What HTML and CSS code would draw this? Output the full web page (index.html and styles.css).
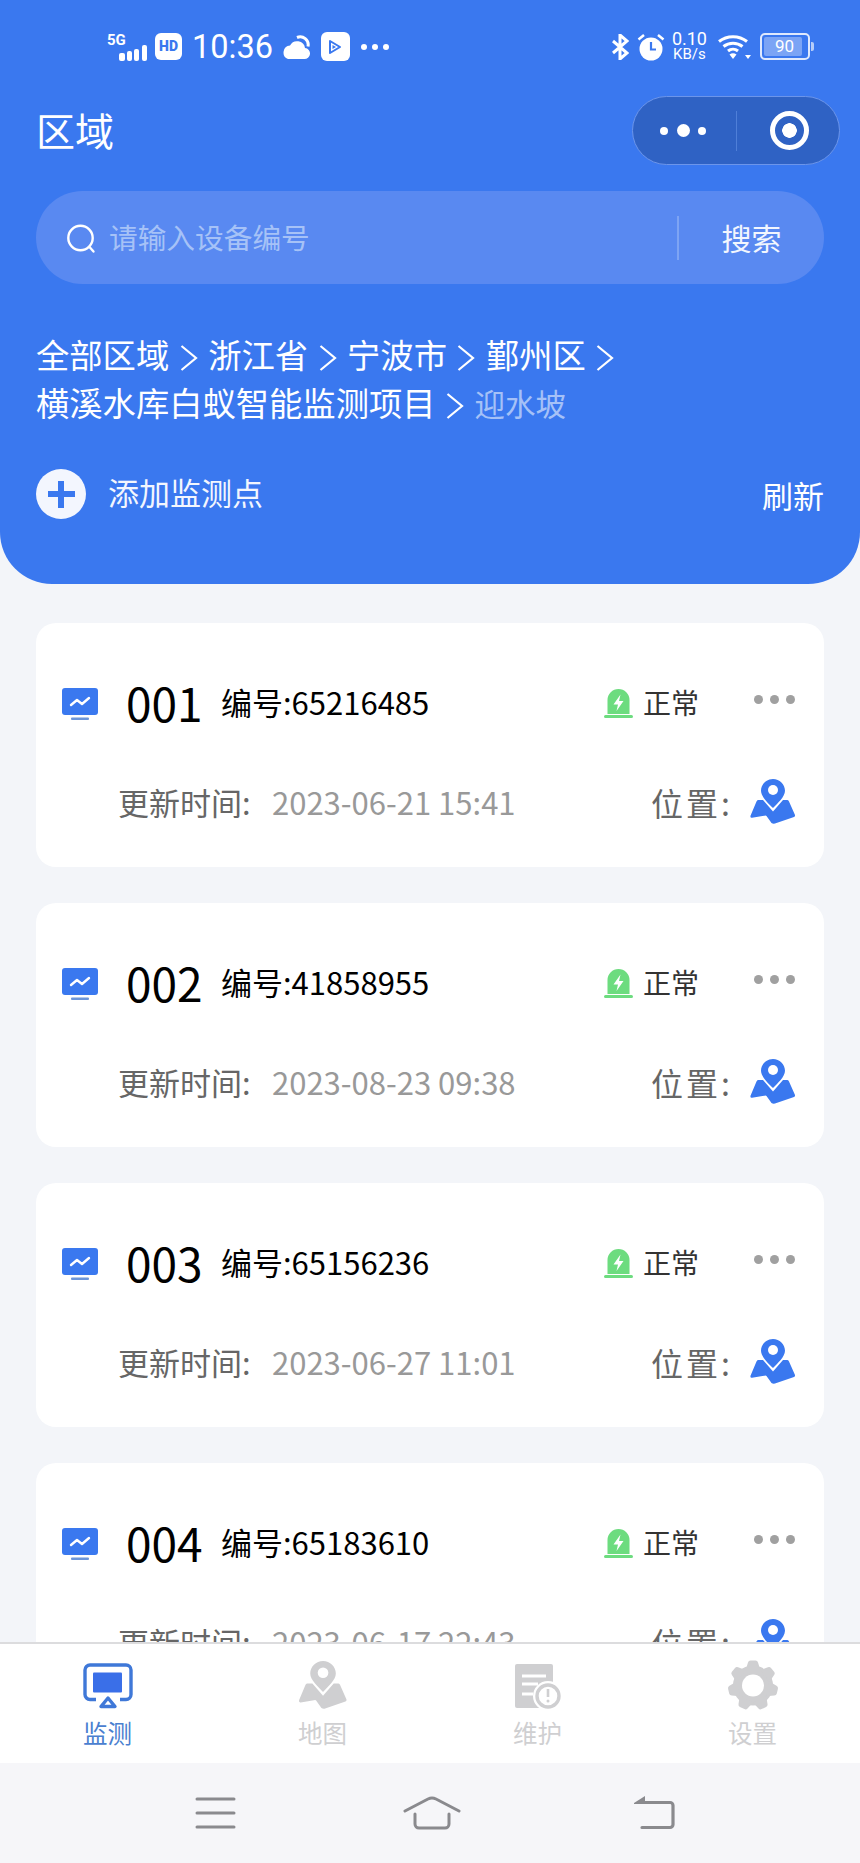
FILE: index.html
```html
<!DOCTYPE html>
<html lang="zh">
<head>
<meta charset="utf-8">
<title>区域</title>
<link rel="stylesheet" href="styles.css">
</head>
<body>
<svg class="defs" width="0" height="0" aria-hidden="true">
  <symbol id="map" viewBox="0 0 45 45">
    <path fill="currentColor" d="M8 21h5L23 32.500 33 21h4.500q1 0 1.500 1.500L45 36q.3 1.500-1 2L25 44.500q-2 .5-3.500-.5l-5-7q-.5-.8-2-.3L2 38.800q-2 .2-1.500-2L6.500 22.500Q7 21 8 21z"/>
    <path fill="currentColor" d="M23 0C29.600 0 35 5.300 35 11.800c0 6-7.500 12.700-12 17.200-4.500-4.500-12-11.200-12-17.200C11 5.300 16.400 0 23 0z"/>
    <circle cx="23" cy="11" r="5" fill="#fff"/>
  </symbol>
  <symbol id="chev" viewBox="0 0 18 28">
    <path fill="none" stroke="currentColor" stroke-width="2.200" d="M1.500 2L16 14 1.500 26"/>
  </symbol>
</svg>

<header class="hero">
  <div class="status">
    <div class="status-left">
      <svg class="sig" width="46" height="30" viewBox="0 0 46 30"><text x="0" y="13" class="sig-text">5G</text><rect x="12" y="21" width="6" height="8" rx="2" fill="#fff"/><rect x="20" y="19" width="5" height="10" rx="2" fill="#fff"/><rect x="27" y="17" width="5" height="12" rx="2" fill="#fff"/><rect x="35" y="13" width="5" height="16" rx="2" fill="#fff"/></svg>
      <span class="hd">HD</span>
      <span class="time">10:36</span>
      <svg width="28" height="26" viewBox="0 0 28 26"><path fill="#fff" d="M6 25h16a5.500 5.500 0 0 0 1-11 8 8 0 0 0-15-2.500A7 7 0 0 0 6 25z"/><path fill="none" stroke="#fff" stroke-width="3" d="M15 3.500a8 8 0 0 1 11 9"/></svg>
      <span class="app"><svg width="16" height="16" viewBox="0 0 16 16"><path fill="none" stroke="#3a78ef" stroke-width="2" stroke-linejoin="round" d="M3 2l10 6-10 6z"/><path fill="#3a78ef" d="M5.500 6l3.500 2-3.500 2z"/></svg></span>
      <span class="more"><i></i><i></i><i></i></span>
    </div>
    <div class="status-right">
      <svg width="18" height="26" viewBox="0 0 18 26"><path fill="none" stroke="#fff" stroke-width="3" d="M2 7l14 12-7 6V1l7 6L2 19"/></svg>
      <svg width="28" height="28" viewBox="0 0 28 28"><circle cx="14" cy="16" r="11.500" fill="#fff"/><path fill="none" stroke="#3a78ef" stroke-width="2.200" d="M14 9v7.500h5"/><path fill="none" stroke="#fff" stroke-width="2.500" d="M1.500 6.500L7 2M26.500 6.500L21 2"/></svg>
      <span class="speed"><b>0.10</b><small>KB/s</small></span>
      <svg width="34" height="26" viewBox="0 0 34 26"><path fill="none" stroke="#fff" stroke-width="3" d="M1 7.500c8-6.500 20-6.500 28 0M5.500 12.500c5.500-4.500 13.500-4.500 19 0M10 17c3-2.500 7-2.500 10 0"/><path fill="#fff" d="M11.500 20.500q3.500-2.500 7 0L15 25z"/><path fill="#fff" d="M27 21h6l-3 4z"/></svg>
      <span class="batt"><span class="batt-fill">90</span></span>
    </div>
  </div>

  <div class="titlebar">
    <h1 class="title">区域</h1>
    <div class="capsule">
      <span class="cap-dots"><i></i><i class="big"></i><i></i></span>
      <span class="cap-line"></span>
      <span class="cap-target"></span>
    </div>
  </div>

  <div class="search">
    <svg class="search-ico" width="30" height="30" viewBox="0 0 30 30"><circle cx="14.500" cy="14" r="12.200" fill="none" stroke="#fff" stroke-width="2.400"/><path stroke="#fff" stroke-width="2.400" stroke-linecap="round" d="M23.500 23l4 4.500"/></svg>
    <span class="search-ph">请输入设备编号</span>
    <span class="search-line"></span>
    <span class="search-btn">搜索</span>
  </div>

  <p class="crumbs">全部区域<svg class="sep"><use href="#chev"/></svg>浙江省<svg class="sep"><use href="#chev"/></svg>宁波市<svg class="sep"><use href="#chev"/></svg>鄞州区<svg class="sep"><use href="#chev"/></svg><br>横溪水库白蚁智能监测项目<svg class="sep"><use href="#chev"/></svg><span class="crumb-cur">迎水坡</span></p>

  <div class="actions">
    <div class="add">
      <span class="add-ico"></span>
      <span class="add-text">添加监测点</span>
    </div>
    <span class="refresh">刷新</span>
  </div>
</header>

<main class="list">
  <article class="card">
    <div class="row-top">
      <svg class="mon" width="36" height="33" viewBox="0 0 36 33"><rect width="36" height="27" rx="3" fill="#3a78ef"/><path fill="none" stroke="#fff" stroke-width="2.400" stroke-linecap="round" stroke-linejoin="round" d="M9 17l6-5 5 4 7-6"/><rect x="9" y="29.500" width="18" height="2.500" rx="1" fill="#6d96d8"/></svg>
      <span class="num">001</span>
      <span class="code">编号:65216485</span>
      <svg class="bell" width="29" height="29" viewBox="0 0 29 29"><path fill="#6ddc7f" d="M3.500 25V11a11 11 0 0 1 22 0v14z"/><path fill="#fff" d="M16.500 5.500l-7 10h4.500l-1.500 6.500 7-10h-4.500z"/><rect y="26" width="29" height="3" rx="1.500" fill="#6ddc7f"/></svg>
      <span class="state">正常</span>
      <span class="dots"><i></i><i></i><i></i></span>
    </div>
    <div class="row-bottom">
      <span class="label">更新时间:</span>
      <span class="date">2023-06-21 15:41</span>
      <span class="pos">位置:</span>
      <svg class="pin" width="45" height="45"><use href="#map"/></svg>
    </div>
  </article>

  <article class="card">
    <div class="row-top">
      <svg class="mon" width="36" height="33" viewBox="0 0 36 33"><rect width="36" height="27" rx="3" fill="#3a78ef"/><path fill="none" stroke="#fff" stroke-width="2.400" stroke-linecap="round" stroke-linejoin="round" d="M9 17l6-5 5 4 7-6"/><rect x="9" y="29.500" width="18" height="2.500" rx="1" fill="#6d96d8"/></svg>
      <span class="num">002</span>
      <span class="code">编号:41858955</span>
      <svg class="bell" width="29" height="29" viewBox="0 0 29 29"><path fill="#6ddc7f" d="M3.500 25V11a11 11 0 0 1 22 0v14z"/><path fill="#fff" d="M16.500 5.500l-7 10h4.500l-1.500 6.500 7-10h-4.500z"/><rect y="26" width="29" height="3" rx="1.500" fill="#6ddc7f"/></svg>
      <span class="state">正常</span>
      <span class="dots"><i></i><i></i><i></i></span>
    </div>
    <div class="row-bottom">
      <span class="label">更新时间:</span>
      <span class="date">2023-08-23 09:38</span>
      <span class="pos">位置:</span>
      <svg class="pin" width="45" height="45"><use href="#map"/></svg>
    </div>
  </article>

  <article class="card">
    <div class="row-top">
      <svg class="mon" width="36" height="33" viewBox="0 0 36 33"><rect width="36" height="27" rx="3" fill="#3a78ef"/><path fill="none" stroke="#fff" stroke-width="2.400" stroke-linecap="round" stroke-linejoin="round" d="M9 17l6-5 5 4 7-6"/><rect x="9" y="29.500" width="18" height="2.500" rx="1" fill="#6d96d8"/></svg>
      <span class="num">003</span>
      <span class="code">编号:65156236</span>
      <svg class="bell" width="29" height="29" viewBox="0 0 29 29"><path fill="#6ddc7f" d="M3.500 25V11a11 11 0 0 1 22 0v14z"/><path fill="#fff" d="M16.500 5.500l-7 10h4.500l-1.500 6.500 7-10h-4.500z"/><rect y="26" width="29" height="3" rx="1.500" fill="#6ddc7f"/></svg>
      <span class="state">正常</span>
      <span class="dots"><i></i><i></i><i></i></span>
    </div>
    <div class="row-bottom">
      <span class="label">更新时间:</span>
      <span class="date">2023-06-27 11:01</span>
      <span class="pos">位置:</span>
      <svg class="pin" width="45" height="45"><use href="#map"/></svg>
    </div>
  </article>

  <article class="card">
    <div class="row-top">
      <svg class="mon" width="36" height="33" viewBox="0 0 36 33"><rect width="36" height="27" rx="3" fill="#3a78ef"/><path fill="none" stroke="#fff" stroke-width="2.400" stroke-linecap="round" stroke-linejoin="round" d="M9 17l6-5 5 4 7-6"/><rect x="9" y="29.500" width="18" height="2.500" rx="1" fill="#6d96d8"/></svg>
      <span class="num">004</span>
      <span class="code">编号:65183610</span>
      <svg class="bell" width="29" height="29" viewBox="0 0 29 29"><path fill="#6ddc7f" d="M3.500 25V11a11 11 0 0 1 22 0v14z"/><path fill="#fff" d="M16.500 5.500l-7 10h4.500l-1.500 6.500 7-10h-4.500z"/><rect y="26" width="29" height="3" rx="1.500" fill="#6ddc7f"/></svg>
      <span class="state">正常</span>
      <span class="dots"><i></i><i></i><i></i></span>
    </div>
    <div class="row-bottom">
      <span class="label">更新时间:</span>
      <span class="date">2023-06-17 22:43</span>
      <span class="pos">位置:</span>
      <svg class="pin" width="45" height="45"><use href="#map"/></svg>
    </div>
  </article>
</main>

<nav class="tabs">
  <div class="tab tab-on">
    <svg width="50" height="46" viewBox="0 0 50 46"><path fill="none" stroke="#3f78d8" stroke-width="3.400" stroke-linejoin="round" d="M13 36.500H7a5 5 0 0 1-5-5V7a5 5 0 0 1 5-5h36a5 5 0 0 1 5 5v24.500a5 5 0 0 1-5 5h-6"/><rect x="10" y="9.500" width="29" height="20" rx="1" fill="#3a6fe8"/><path fill="none" stroke="#3f78d8" stroke-width="3.400" stroke-linejoin="round" d="M25 35l7 8.500H18z"/></svg>
    <span>监测</span>
  </div>
  <div class="tab">
    <svg class="tab-map" width="49" height="48"><use href="#map"/></svg>
    <span>地图</span>
  </div>
  <div class="tab">
    <svg width="50" height="46" viewBox="0 0 50 46"><path fill="#cfcfd1" d="M4 1h34a2 2 0 0 1 2 2v42H4a2 2 0 0 1-2-2V3a2 2 0 0 1 2-2z"/><path stroke="#fff" stroke-width="3" d="M9 13h24M9 21h16M9 31h11"/><circle cx="35" cy="33" r="15" fill="#fff"/><circle cx="35" cy="33" r="11" fill="#fff" stroke="#cfcfd1" stroke-width="3.400"/><path stroke="#cfcfd1" stroke-width="2.600" d="M35 26v8"/><circle cx="35" cy="38" r="1.500" fill="#cfcfd1"/></svg>
    <span>维护</span>
  </div>
  <div class="tab">
    <svg class="tab-gear" width="52" height="51" viewBox="0 0 52 50"><g fill="#cfcfd1"><circle cx="26" cy="25" r="20"/><path d="M18.500 10L21 2q.5-2 2.500-2h5q2 0 2.500 2L33.500 10z"/><path d="M18.500 10L21 2q.5-2 2.500-2h5q2 0 2.500 2L33.500 10z" transform="rotate(51.430 26 25)"/><path d="M18.500 10L21 2q.5-2 2.500-2h5q2 0 2.500 2L33.500 10z" transform="rotate(102.860 26 25)"/><path d="M18.500 10L21 2q.5-2 2.500-2h5q2 0 2.500 2L33.500 10z" transform="rotate(154.290 26 25)"/><path d="M18.500 10L21 2q.5-2 2.500-2h5q2 0 2.500 2L33.500 10z" transform="rotate(205.710 26 25)"/><path d="M18.500 10L21 2q.5-2 2.500-2h5q2 0 2.500 2L33.500 10z" transform="rotate(257.140 26 25)"/><path d="M18.500 10L21 2q.5-2 2.500-2h5q2 0 2.500 2L33.500 10z" transform="rotate(308.570 26 25)"/></g><circle cx="26" cy="25" r="11" fill="#fff"/></svg>
    <span>设置</span>
  </div>
</nav>

<footer class="sysnav">
  <svg width="42" height="34" viewBox="0 0 42 34"><path stroke="#8a8a8e" stroke-width="3" stroke-linecap="round" d="M2 3h37M2 17h37M2 31h37"/></svg>
  <svg width="58" height="36" viewBox="0 0 58 36"><path fill="none" stroke="#8a8a8e" stroke-width="3" stroke-linecap="round" stroke-linejoin="round" d="M2 16L25 4q4-2 8 0l23 12M12 19v10a4 4 0 0 0 4 4h26a4 4 0 0 0 4-4V19"/></svg>
  <svg class="nav-back" width="42" height="34" viewBox="0 0 42 34"><path fill="none" stroke="#8a8a8e" stroke-width="3.200" stroke-linecap="round" stroke-linejoin="round" d="M10 6.500h26a3 3 0 0 1 3 3v19a3 3 0 0 1-3 3H8"/><path fill="#8a8a8e" d="M0 7l11-7v8H0z"/></svg>
</footer>
</body>
</html>
```

FILE: styles.css
```css
* { box-sizing: border-box; }
html, body { margin: 0; padding: 0; }
body {
  width: 860px;
  height: 1863px;
  overflow: hidden;
  display: flex;
  flex-direction: column;
  background: #f3f5f9;
  font-family: "Noto Sans CJK SC", "Noto Sans", sans-serif;
  color: #000;
}
.defs { position: absolute; }
i { display: block; font-style: normal; }
p, h1 { margin: 0; font-weight: 400; }

.hero {
  flex: none;
  height: 584px;
  background: #3a78ef;
  border-radius: 0 0 52px 52px;
  color: #fff;
  padding: 0 36px;
}

.status {
  height: 96px;
  display: flex;
  justify-content: space-between;
  align-items: center;
  padding: 0 14px 3px 71px;
}
.status-left, .status-right { display: flex; align-items: center; }
.status-left svg, .status-left span, .status-right svg, .status-right span { flex: none; }
.sig-text { font: 700 15px "Roboto", sans-serif; fill: #fff; }
.hd {
  width: 27px; height: 27px; margin-left: 2px;
  background: #fff; border-radius: 6px;
  color: #3a78ef; font: 900 14px/27px "Roboto", sans-serif; text-align: center;
}
.time { font: 400 32.500px/36px "Roboto", sans-serif; margin: 0 9px 0 10px; }
.app {
  width: 29px; height: 29px; margin-left: 11px;
  background: #fff; border-radius: 6px;
  display: flex; align-items: center; justify-content: center;
}
.more { display: flex; gap: 5px; margin-left: 11px; }
.more i { width: 6px; height: 6px; border-radius: 50%; background: #fff; }

.status-right svg:first-child { margin-right: 8px; }
.speed { display: flex; flex-direction: column; align-items: center; margin: -1px 11px 0 7px; font-family: "Roboto", sans-serif; }
.speed b { font-weight: 400; font-size: 18px; line-height: 17px; height: 17px; }
.speed small { font-size: 15px; line-height: 15px; height: 15px; }
.batt {
  width: 50px; height: 27px; margin-left: 8px;
  border: 2px solid #dfe9fd; border-radius: 5px;
  padding: 2px;
  position: relative;
}
.batt::after {
  content: ""; position: absolute; right: -6px; top: 7px;
  width: 3px; height: 9px; background: #b6cdf8; border-radius: 0 2px 2px 0;
}
.batt-fill {
  display: block; height: 100%; width: 38px;
  background: #7ba4f5; border-radius: 2px;
  color: #fff; font: 400 17px/19px "Roboto", sans-serif; text-align: center; padding-left: 3px;
}

.titlebar {
  height: 69px;
  display: flex;
  align-items: center;
  justify-content: space-between;
}
.title { font-size: 39px; line-height: 50px; margin-top: -3px; }
.capsule {
  width: 208px; height: 69px; margin-right: -16px;
  border-radius: 35px;
  background: #2f62c4;
  border: 1px solid #6c95ea;
  display: flex; align-items: center;
  padding-left: 27px;
}
.cap-dots { display: flex; align-items: center; gap: 8.500px; width: 76px; }
.cap-dots i { width: 8px; height: 8px; border-radius: 50%; background: #fff; }
.cap-dots .big { width: 13px; height: 13px; }
.cap-line { width: 1px; height: 40px; background: #4f7fd8; }
.cap-target {
  width: 39px; height: 39px; margin-left: 33px;
  border-radius: 50%;
  border: 5px solid #fff;
  background: radial-gradient(circle, #fff 0 7px, transparent 7.500px);
}

.search {
  height: 93px;
  margin-top: 26px;
  border-radius: 47px;
  background: #5989f1;
  display: flex;
  align-items: center;
  padding-left: 30px;
}
.search-ico { flex: none; margin-top: 2px; }
.search-ph { flex: 1; margin: -2px 0 0 13px; font-size: 28.700px; line-height: 40px; color: #a6c2f7; }
.search-line { width: 2px; height: 44px; background: #7ea4f4; }
.search-btn { width: 145px; margin-top: -2px; text-align: center; font-size: 30px; line-height: 40px; color: #f2f6fe; }

.crumbs {
  margin-top: 46px;
  font-size: 33.300px;
  line-height: 48px;
}
.sep {
  display: inline-block;
  width: 18px;
  height: 28px;
  margin: 0 10.500px;
  vertical-align: -4px;
  color: #fff;
}
.crumb-cur { color: #a5c1f7; font-size: 30.500px; }

.actions {
  margin-top: 41px;
  display: flex;
  align-items: center;
  justify-content: space-between;
}
.add { display: flex; align-items: center; font-size: 31px; line-height: 50px; color: #f3f6fe; }
.add-text { margin-top: -5px; }
.add-ico {
  width: 50px; height: 50px; margin-right: 22px;
  border-radius: 50%;
  background:
    linear-gradient(#3a78ef, #3a78ef) center / 27px 6px no-repeat,
    linear-gradient(#3a78ef, #3a78ef) center / 6px 27px no-repeat,
    #f3f6fe;
}
.refresh { font-size: 31px; line-height: 50px; margin-top: 2px; }

.list {
  flex: 1;
  min-height: 0;
  overflow: hidden;
  padding: 39px 36px 0;
  display: flex;
  flex-direction: column;
  gap: 36px;
}
.card {
  flex: none;
  height: 244px;
  background: #fff;
  border-radius: 20px;
  padding: 53px 29px 0 26px;
}
.row-top { height: 52px; display: flex; align-items: center; }
.mon { flex: none; margin-top: 4px; }
.num { width: 95px; margin-left: 28px; font-size: 46px; line-height: 52px; }
.code { width: 383px; font-size: 31px; line-height: 40px; }
.bell { flex: none; margin-top: 2px; }
.state { margin-left: 10px; width: 57px; font-size: 28px; line-height: 40px; color: #333; }
.dots { display: flex; gap: 7px; margin-left: 54px; margin-top: -6px; }
.dots i { width: 9px; height: 9px; border-radius: 50%; background: #a0a0a0; }

.row-bottom { margin-top: 51px; display: flex; align-items: center; height: 45px; padding-left: 56px; }
.label { width: 154px; font-size: 31px; line-height: 40px; color: #666; }
.date { flex: 1; font-size: 31px; line-height: 40px; color: #999; }
.pos { font-size: 32px; letter-spacing: 3px; line-height: 40px; color: #666; margin-right: 17px; }
.pin { flex: none; color: #3a78ef; margin-top: 0; }

.tabs {
  flex: none;
  height: 121px;
  background: #fff;
  border-top: 2px solid #dcdcde;
  display: grid;
  grid-template-columns: repeat(4, 215px);
  justify-content: start;
}
.tab {
  display: flex;
  flex-direction: column;
  align-items: center;
  padding-top: 19px;
  font-size: 24.500px;
  line-height: 30px;
  color: #cfcfd1;
}
.tab svg { display: block; height: 46px; margin-bottom: 9px; }
.tab-on { color: #4a80d0; }
.tab .tab-map { color: #cfcfd1; height: 48px; margin-top: -2px; }
.tab .tab-gear { height: 51px; margin-top: -3px; margin-bottom: 7px; }

.sysnav {
  flex: none;
  height: 100px;
  background: #f6f6f9;
  display: flex;
  align-items: center;
  padding-left: 195px;
  gap: 166px;
}
.nav-back { margin-left: 7px; }
```
